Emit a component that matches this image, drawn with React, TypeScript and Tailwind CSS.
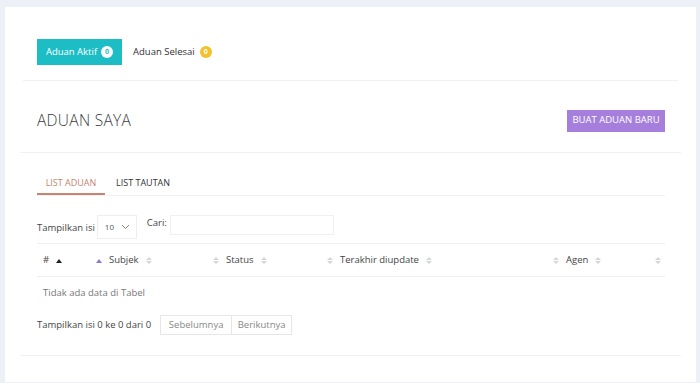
import React from "react";

const font = { fontFamily: '"Open Sans", "Noto Sans", sans-serif' };

type Column = { label: string; width: string; lead?: "up" | "both" | null; trail?: "up" | "both" | null };

const columns: Column[] = [
  { label: "#", width: "w-[53px]", lead: null, trail: "up" },
  { label: "Subjek", width: "w-[117px]", lead: "up", trail: "both" },
  { label: "Status", width: "w-[114px]", lead: "both", trail: "both" },
  { label: "Terakhir diupdate", width: "w-[226px]", lead: "both", trail: "both" },
  { label: "Agen", width: "w-[102px]", lead: "both", trail: "both" },
  { label: "", width: "flex-1", lead: "both", trail: null },
];

export default function App() {
  return (
    <div style={font} className="h-[383px] w-[700px] overflow-hidden bg-[#edf0f6] pl-[5px] pr-[4px] pt-[7px]">
      <div className="h-[375px] bg-white">
        <TopTabs />
        <div className="mx-[18px] h-px bg-[#f1f2f5]" />

        <div className="flex h-[71px] items-center justify-between pl-[32px] pr-[31px] pt-[8px]">
          <h1 className="text-[15.5px] font-light tracking-[0.3px] text-[#3a3a3a]">ADUAN SAYA</h1>
          <button className="h-[22px] w-[98px] bg-[#a57fdb] text-[9.5px] font-medium text-white">
            BUAT ADUAN BARU
          </button>
        </div>
        <div className="mx-[15px] h-px bg-[#f1f2f5]" />

        <div className="px-[32px] pr-[31px]">
          <SubTabs />
          <Controls />
          <TableHead />
          <p className="flex h-[32px] items-center pl-[6px] text-[9.5px] text-[#777]">Tidak ada data di Tabel</p>
          <Footer />
        </div>
        <div className="mx-[15px] mt-[20px] h-px bg-[#f1f2f5]" />
      </div>
    </div>
  );
}

function TopTabs() {
  return (
    <div className="flex items-center pb-[15px] pl-[32px] pt-[32px]">
      <div className="flex h-[26px] w-[85px] items-center justify-center gap-[4px] bg-[#1dbdc5] text-[9.5px] text-white">
        Aduan Aktif
        <span className="flex h-[12px] w-[12px] items-center justify-center rounded-full bg-white text-[7px] font-bold text-[#1dbdc5]">
          0
        </span>
      </div>
      <div className="ml-[11px] flex items-center gap-[5px] text-[9.5px] text-[#333]">
        Aduan Selesai
        <span className="flex h-[12px] w-[12px] items-center justify-center rounded-full bg-[#f5c02a] text-[7px] font-bold text-white">
          0
        </span>
      </div>
    </div>
  );
}

function SubTabs() {
  return (
    <div className="flex h-[43px] items-end border-b border-[#f0f1f4]">
      <div className="flex h-[19px] w-[68px] flex-col items-center justify-start border-b-2 border-[#c8846f] text-[9px] text-[#c8846f]">
        LIST ADUAN
      </div>
      <div className="ml-[11px] flex h-[19px] items-start text-[9px] text-[#333]">LIST TAUTAN</div>
    </div>
  );
}

function Controls() {
  return (
    <div className="mt-[19px] flex h-[24px] items-start text-[9.5px] text-[#444]">
      <span className="mt-[6px]">Tampilkan isi</span>
      <div className="ml-[2px] flex h-[24px] w-[40px] items-center justify-between border border-[#eeeeee] pl-[7px] pr-[6px] text-[8px] text-[#555]">
        10
        <svg width="9" height="6" viewBox="0 0 9 6" fill="none">
          <path d="M1 1l3.5 3.5L8 1" stroke="#888" strokeWidth="1" />
        </svg>
      </div>
      <span className="ml-[10px] mt-[1px]">Cari:</span>
      <div className="ml-[3px] h-[20px] w-[164px] border border-[#f0f0f0]" />
    </div>
  );
}

function SortIcon({ kind, tone }: { kind: "up" | "both"; tone: "dark" | "purple" | "faint" }) {
  const color = tone === "dark" ? "#222" : tone === "purple" ? "#8a7bd0" : "#d6d6d6";
  if (kind === "up") {
    return (
      <svg width="6" height="5" viewBox="0 0 6 5">
        <path d="M0 5L3 1L6 5Z" fill={color} />
      </svg>
    );
  }
  return (
    <svg width="6" height="9" viewBox="0 0 6 9">
      <path d="M0 4L3 1L6 4Z M0 5L3 8L6 5Z" fill={color} />
    </svg>
  );
}

function TableHead() {
  return (
    <div className="mt-[4px] flex h-[34px] items-center border-y border-[#efefef] text-[9.5px] text-[#444]">
      {columns.map((col, i) => (
        <div key={i} className={`${col.width} flex h-full items-center gap-[7px] pl-[6px]`}>
          {col.lead ? (
            <SortIcon kind={col.lead} tone={col.lead === "up" ? "purple" : "faint"} />
          ) : null}
          {col.label ? <span>{col.label}</span> : null}
          {col.trail ? (
            <SortIcon kind={col.trail} tone={col.trail === "up" ? "dark" : "faint"} />
          ) : null}
        </div>
      ))}
    </div>
  );
}

function Footer() {
  return (
    <div className="mt-[6px] flex h-[20px] items-center text-[9.5px] text-[#444]">
      <span>Tampilkan isi 0 ke 0 dari 0</span>
      <div className="ml-[9px] flex h-[20px] border border-[#e6e6e6] text-[#888]">
        <span className="flex w-[71px] items-center justify-center border-r border-[#e6e6e6]">Sebelumnya</span>
        <span className="flex w-[59px] items-center justify-center">Berikutnya</span>
      </div>
    </div>
  );
}
